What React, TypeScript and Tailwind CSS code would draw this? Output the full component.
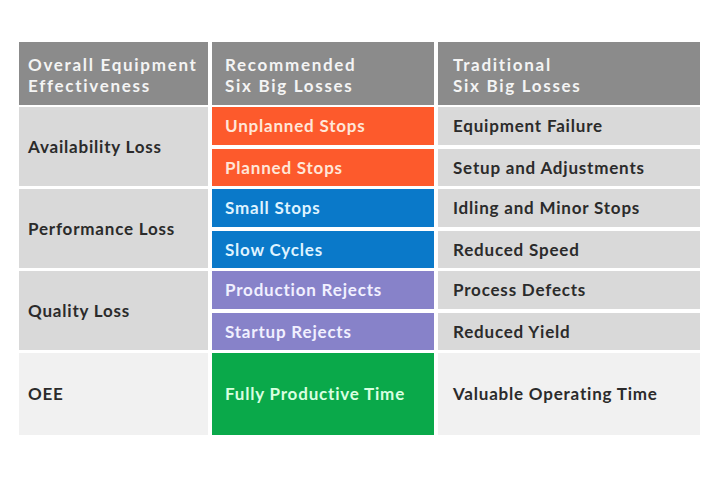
import React from "react";

type Group = {
  label: string;
  color: string;
  textColor: string;
  rows: { rec: string; trad: string }[];
};

const groups: Group[] = [
  {
    label: "Availability Loss",
    color: "bg-[#fd5a2c]",
    textColor: "text-[#ffe6d8]",
    rows: [
      { rec: "Unplanned Stops", trad: "Equipment Failure" },
      { rec: "Planned Stops", trad: "Setup and Adjustments" },
    ],
  },
  {
    label: "Performance Loss",
    color: "bg-[#0a79c9]",
    textColor: "text-[#dff3ff]",
    rows: [
      { rec: "Small Stops", trad: "Idling and Minor Stops" },
      { rec: "Slow Cycles", trad: "Reduced Speed" },
    ],
  },
  {
    label: "Quality Loss",
    color: "bg-[#8782c9]",
    textColor: "text-[#f1f0ff]",
    rows: [
      { rec: "Production Rejects", trad: "Process Defects" },
      { rec: "Startup Rejects", trad: "Reduced Yield" },
    ],
  },
];

const cell = "font-bold text-[17px] tracking-[0.8px]";
const head =
  "bg-[#8b8b8b] pt-[12px] text-[#f4f4f4] font-bold text-[17px] leading-[21px] tracking-[1.7px]";

const App: React.FC = () => {
  return (
    <div
      className="w-[720px] h-[480px] bg-white pt-[42px] pl-[19px]"
      style={{ fontFamily: "Lato, 'Open Sans', sans-serif" }}
    >
      <div className="w-[681px] flex flex-col">
        {/* header */}
        <div className="grid grid-cols-[189px_222px_262px] gap-x-[4px] h-[63px]">
          <div className={`${head} pl-[9px]`}>
            Overall Equipment
            <br />
            Effectiveness
          </div>
          <div className={`${head} pl-[13px]`}>
            Recommended
            <br />
            Six Big Losses
          </div>
          <div className={`${head} pl-[15px]`}>
            Traditional
            <br />
            Six Big Losses
          </div>
        </div>

        <div className="flex flex-col gap-[3px] mt-[2px]">
          {groups.map((g) => (
            <div
              key={g.label}
              className="grid grid-cols-[189px_222px_262px] gap-x-[4px] h-[79px]"
            >
              <div className={`bg-[#d9d9d9] flex items-center pl-[9px] text-[#2b2b2b] ${cell}`}>
                {g.label}
              </div>
              <div className="flex flex-col gap-[4px]">
                {g.rows.map((r) => (
                  <div
                    key={r.rec}
                    className={`${g.color} ${g.textColor} flex-1 flex items-center pl-[13px] ${cell}`}
                  >
                    {r.rec}
                  </div>
                ))}
              </div>
              <div className="flex flex-col gap-[4px]">
                {g.rows.map((r) => (
                  <div
                    key={r.trad}
                    className={`bg-[#d9d9d9] flex-1 flex items-center pl-[15px] text-[#2b2b2b] ${cell}`}
                  >
                    {r.trad}
                  </div>
                ))}
              </div>
            </div>
          ))}

          <div className="grid grid-cols-[189px_222px_262px] gap-x-[4px] h-[82px]">
            <div className={`bg-[#f1f1f1] flex items-center pl-[9px] text-[#2b2b2b] ${cell}`}>
              OEE
            </div>
            <div className={`bg-[#0aa94a] flex items-center pl-[13px] text-[#d9ffe0] ${cell}`}>
              Fully Productive Time
            </div>
            <div className={`bg-[#f1f1f1] flex items-center pl-[15px] text-[#2b2b2b] ${cell}`}>
              Valuable Operating Time
            </div>
          </div>
        </div>
      </div>
    </div>
  );
};

export default App;
